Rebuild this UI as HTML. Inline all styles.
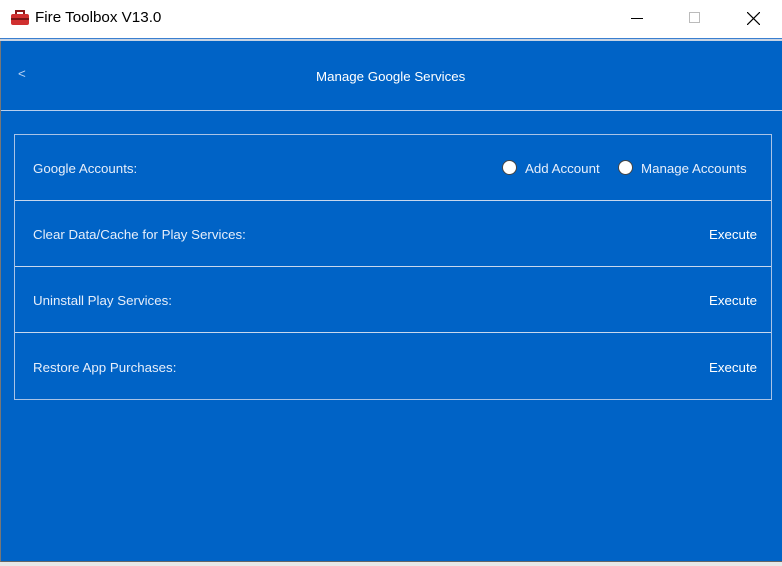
<!DOCTYPE html>
<html><head><style>
*{margin:0;padding:0;box-sizing:border-box}
body{width:782px;height:566px;background:#e8e8e8;font-family:"Liberation Sans",sans-serif;position:relative;overflow:hidden}
.tb{position:absolute;left:0;top:0;width:782px;height:38px;background:#fff}
.tt{position:absolute;left:35px;top:9px;font-size:15.2px;color:#000}
.main{position:absolute;left:0;top:38px;width:782px;height:524px;background:#0063c6;border-left:1px solid #777;border-bottom:1px solid #666;border-top:1px solid #3a7fd0}
.topline{position:absolute;left:0;top:39px;width:782px;height:2px;background:#c8d4e4}
.w{color:#fff;font-size:13.3px;position:absolute}
.sep{position:absolute;left:1px;top:110px;width:781px;height:1px;background:#b8cfee}
.box{position:absolute;left:14px;top:134px;width:758px;height:266px;border:1px solid #a9c3e6}
.row{position:absolute;left:0;width:756px;height:1px;background:#c8d8ee}
.rad{position:absolute;width:15px;height:15px;border-radius:50%;background:#fff;border:1px solid #444}
</style></head><body>
<div class="tb">
<svg style="position:absolute;left:10px;top:10px" width="20" height="16" viewBox="0 0 20 16"><rect x="6" y="1" width="8" height="4" fill="none" stroke="#8b1a1a" stroke-width="2"/><rect x="1" y="4" width="18" height="11" rx="2" fill="#d03030"/><rect x="1" y="8" width="18" height="2" fill="#7a1515"/></svg>
<div class="tt">Fire Toolbox V13.0</div>
<div style="position:absolute;left:631px;top:18px;width:12px;height:1px;background:#000"></div>
<div style="position:absolute;left:689px;top:12px;width:11px;height:11px;border:1px solid #bbb"></div>
<svg style="position:absolute;left:747px;top:12px" width="13" height="13"><path d="M0 0L13 13M13 0L0 13" stroke="#000" stroke-width="1.2"/></svg>
</div>
<div class="main"></div>
<div class="topline"></div>
<div class="w" style="left:18px;top:66px;color:#bcd4f4">&lt;</div>
<div class="w" style="left:316px;top:69px">Manage Google Services</div>
<div class="sep"></div>
<div class="box">
<div class="row" style="top:65px"></div>
<div class="row" style="top:131px"></div>
<div class="row" style="top:197px"></div>
</div>
<div class="w" style="left:33px;top:161px;color:#e6eefa">Google Accounts:</div>
<div class="rad" style="left:502px;top:160px"></div>
<div class="w" style="left:525px;top:161px;color:#e6eefa">Add Account</div>
<div class="rad" style="left:618px;top:160px"></div>
<div class="w" style="left:641px;top:161px;color:#e6eefa">Manage Accounts</div>
<div class="w" style="left:33px;top:227px;color:#e6eefa">Clear Data/Cache for Play Services:</div>
<div class="w" style="left:709px;top:227px">Execute</div>
<div class="w" style="left:33px;top:293px;color:#e6eefa">Uninstall Play Services:</div>
<div class="w" style="left:709px;top:293px">Execute</div>
<div class="w" style="left:33px;top:360px;color:#e6eefa">Restore App Purchases:</div>
<div class="w" style="left:709px;top:360px">Execute</div>
</body></html>
